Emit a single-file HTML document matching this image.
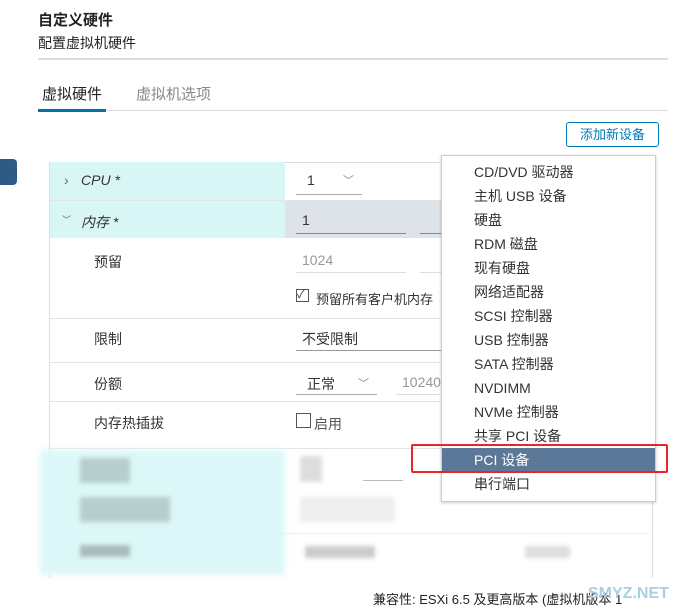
<!DOCTYPE html><html><head><meta charset="utf-8"><style>
body{margin:0;width:680px;height:616px;background:#fff;position:relative;overflow:hidden;font-family:"Liberation Sans","Noto Sans CJK SC",sans-serif;color:#333}
.a{position:absolute}
.t{font-size:14px;white-space:nowrap}
.dd div{height:24px;line-height:24px;padding-left:32px;font-size:14px;color:#333}
</style></head><body>
<div class="a t" style="left:38px;top:9px;font-weight:bold;font-size:15px;color:#222">自定义硬件</div>
<div class="a t" style="left:38px;top:33px;color:#222">配置虚拟机硬件</div>
<div class="a" style="left:38px;top:58px;width:630px;height:2px;background:#ddd"></div>
<div class="a t" style="left:42px;top:83px;font-size:15px;color:#222">虚拟硬件</div>
<div class="a t" style="left:136px;top:83px;font-size:15px;color:#888">虚拟机选项</div>
<div class="a" style="left:38px;top:110px;width:630px;height:1px;background:#ddd"></div>
<div class="a" style="left:38px;top:109px;width:68px;height:3px;background:#0072a3"></div>
<div class="a t" style="left:566px;top:122px;width:91px;height:23px;border:1px solid #0079b8;border-radius:3px;line-height:23px;text-align:center;font-size:13px;color:#0079b8">添加新设备</div>
<div class="a" style="left:0;top:159px;width:17px;height:26px;background:#2f5a84;border-radius:0 4px 4px 0"></div>
<div class="a" style="left:49px;top:162px;width:602px;height:415px;border:1px solid #ddd;border-bottom:none"></div>
<div class="a" style="left:50px;top:162px;width:235px;height:76px;background:#d8f6f6"></div>
<div class="a" style="left:285px;top:200px;width:160px;height:38px;background:#dde3e9"></div>
<div class="a" style="left:50px;top:200px;width:600px;height:1px;background:#e4e4e4"></div>
<div class="a t" style="left:64px;top:172px;color:#666">›</div>
<div class="a t" style="left:81px;top:172px;font-style:italic;color:#333">CPU *</div>
<div class="a t" style="left:307px;top:172px">1</div><div class="a t" style="left:343px;top:172px;color:#888;font-size:11px">﹀</div>
<div class="a" style="left:296px;top:194px;width:66px;height:1px;background:#aaa"></div>
<div class="a t" style="left:62px;top:213px;color:#666;font-size:9px">﹀</div>
<div class="a t" style="left:81px;top:212px;font-style:italic">内存 *</div>
<div class="a t" style="left:302px;top:212px">1</div>
<div class="a" style="left:296px;top:233px;width:110px;height:1px;background:#888"></div>
<div class="a" style="left:420px;top:233px;width:25px;height:1px;background:#888"></div>
<div class="a t" style="left:94px;top:252px">预留</div>
<div class="a t" style="left:302px;top:252px;color:#999">1024</div>
<div class="a" style="left:296px;top:272px;width:110px;height:1px;background:#ddd"></div>
<div class="a" style="left:420px;top:272px;width:25px;height:1px;background:#ddd"></div>
<div class="a" style="left:296px;top:289px;width:11px;height:11px;border:1px solid #555;font-size:11px;line-height:11px">✓</div>
<div class="a t" style="left:316px;top:289px;font-size:13px;width:125px;overflow:hidden">预留所有客户机内存</div>
<div class="a" style="left:50px;top:318px;width:600px;height:1px;background:#e4e4e4"></div>
<div class="a t" style="left:94px;top:329px">限制</div>
<div class="a t" style="left:302px;top:329px">不受限制</div>
<div class="a" style="left:296px;top:350px;width:145px;height:1px;background:#999"></div>
<div class="a" style="left:50px;top:362px;width:600px;height:1px;background:#e4e4e4"></div>
<div class="a t" style="left:94px;top:374px">份额</div>
<div class="a t" style="left:307px;top:374px">正常</div><div class="a t" style="left:358px;top:375px;color:#888;font-size:11px">﹀</div>
<div class="a" style="left:296px;top:394px;width:81px;height:1px;background:#aaa"></div>
<div class="a t" style="left:402px;top:374px;color:#999">10240</div>
<div class="a" style="left:396px;top:394px;width:45px;height:1px;background:#ddd"></div>
<div class="a" style="left:50px;top:401px;width:600px;height:1px;background:#e4e4e4"></div>
<div class="a t" style="left:94px;top:413px">内存热插拔</div>
<div class="a" style="left:296px;top:413px;width:13px;height:13px;border:1px solid #555"></div>
<div class="a t" style="left:314px;top:414px;color:#555">启用</div>
<div class="a" style="left:50px;top:448px;width:600px;height:1px;background:#e4e4e4"></div>
<div class="a" style="left:40px;top:450px;width:245px;height:125px;background:#dcf7f7;filter:blur(3px)"></div>
<div class="a" style="left:80px;top:458px;width:50px;height:25px;background:#b8cece;filter:blur(2px)"></div>
<div class="a" style="left:80px;top:497px;width:90px;height:25px;background:#b8cece;filter:blur(2px)"></div>
<div class="a" style="left:80px;top:545px;width:50px;height:12px;background:#a9bcbc;filter:blur(2px)"></div>
<div class="a" style="left:300px;top:456px;width:22px;height:26px;background:#ddd;filter:blur(2px)"></div>
<div class="a" style="left:300px;top:497px;width:95px;height:25px;background:#eee;filter:blur(2px)"></div>
<div class="a" style="left:305px;top:546px;width:70px;height:12px;background:#ccc;filter:blur(2px)"></div>
<div class="a" style="left:525px;top:546px;width:45px;height:12px;background:#ddd;filter:blur(2px)"></div>
<div class="a" style="left:363px;top:480px;width:40px;height:1px;background:#bbb"></div>
<div class="a" style="left:50px;top:533px;width:600px;height:1px;background:#eee"></div>
<div class="a" style="left:441px;top:155px;width:213px;height:345px;border:1px solid #ccc;background:#fff;box-shadow:0 1px 3px rgba(0,0,0,.2)">
<div class="dd" style="padding-top:4px">
<div>CD/DVD 驱动器</div><div>主机 USB 设备</div><div>硬盘</div><div>RDM 磁盘</div><div>现有硬盘</div><div>网络适配器</div><div>SCSI 控制器</div><div>USB 控制器</div><div>SATA 控制器</div><div>NVDIMM</div><div>NVMe 控制器</div><div>共享 PCI 设备</div><div style="background:#5c7899;color:#fff">PCI 设备</div><div>串行端口</div>
</div></div>
<div class="a" style="left:411px;top:444px;width:253px;height:25px;border:2px solid #e8262a;border-radius:2px"></div>
<div class="a t" style="left:373px;top:589px;font-size:13px;color:#222">兼容性: ESXi 6.5 及更高版本 (虚拟机版本 1</div>
<div class="a t" style="left:588px;top:585px;font-size:16px;color:#aacfe0;font-weight:bold">SMYZ.NET</div>
</body></html>
